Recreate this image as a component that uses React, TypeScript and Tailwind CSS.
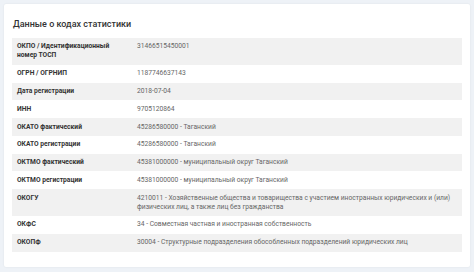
const rows: [string, string][] = [
  ["ОКПО / Идентификационный номер ТОСП", "31466515450001"],
  ["ОГРН / ОГРНИП", "1187746637143"],
  ["Дата регистрации", "2018-07-04"],
  ["ИНН", "9705120864"],
  ["ОКАТО фактический", "45286580000 - Таганский"],
  ["ОКАТО регистрации", "45286580000 - Таганский"],
  ["ОКТМО фактический", "45381000000 - муниципальный округ Таганский"],
  ["ОКТМО регистрации", "45381000000 - муниципальный округ Таганский"],
  [
    "ОКОГУ",
    "4210011 - Хозяйственные общества и товарищества с участием иностранных юридических и (или) физических лиц, а также лиц без гражданства",
  ],
  ["ОКФС", "34 - Совместная частная и иностранная собственность"],
  ["ОКОПФ", "30004 - Структурные подразделения обособленных подразделений юридических лиц"],
];

const App = () => {
  return (
    <div
      className="w-[474px] h-[272px] bg-[#eef2f7] pt-[4px] pl-[4px]"
      style={{ fontFamily: "Roboto, 'Noto Sans', sans-serif" }}>
      <div className="w-[466px] h-[263px] bg-white rounded-[2px] shadow-[0_0_2px_rgba(0,0,0,0.08)] pt-[15px] px-[8px]">
        <h2 className="text-[9px] leading-[11px] font-medium text-[#333] pl-[1px] mb-[8px]">
          Данные о кодах статистики
        </h2>
        <div className="flex flex-col">
          {rows.map(([label, value], i) => (
            <div
              key={label}
              className={
                "flex text-[6.7px] leading-[9px] " +
                (i % 2 === 0 ? "bg-[#f1f1f1]" : "bg-white")
              }>
              <div className="w-[125px] shrink-0 pl-[5px] pr-[8px] py-[4.4px] font-bold text-[#333]">{label}</div>
              <div className="flex-1 pr-[2px] py-[4.4px] text-[#666]">{value}</div>
            </div>
          ))}
        </div>
      </div>
    </div>
  );
};

export default App;
